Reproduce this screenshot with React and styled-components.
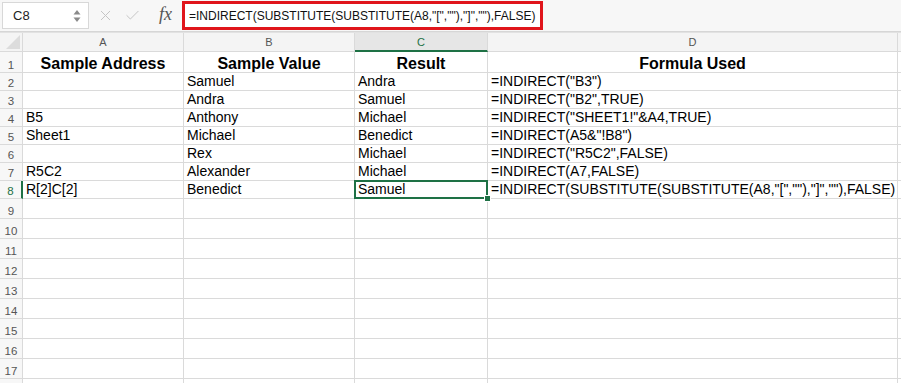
import React from 'react';
import styled, { createGlobalStyle } from 'styled-components';
import { X, Check } from 'lucide-react';

const GlobalStyle = createGlobalStyle`
    html, body {
        margin: 0;
        padding: 0;
        background: #ffffff;
        font-family: "Liberation Sans", Arial, sans-serif;
    }
    * { box-sizing: border-box; }
`

const GREEN = '#1e7145';
const LINE = '#dadada';

const COLS = ['A', 'B', 'C', 'D', ''];

const DATA = [
    ['Sample Address', 'Sample Value', 'Result', 'Formula Used'],
    ['', 'Samuel', 'Andra', '=INDIRECT("B3")'],
    ['', 'Andra', 'Samuel', '=INDIRECT("B2",TRUE)'],
    ['B5', 'Anthony', 'Michael', '=INDIRECT("SHEET1!"&A4,TRUE)'],
    ['Sheet1', 'Michael', 'Benedict', '=INDIRECT(A5&"!B8")'],
    ['', 'Rex', 'Michael', '=INDIRECT("R5C2",FALSE)'],
    ['R5C2', 'Alexander', 'Michael', '=INDIRECT(A7,FALSE)'],
    ['R[2]C[2]', 'Benedict', 'Samuel', '=INDIRECT(SUBSTITUTE(SUBSTITUTE(A8,"[",""),"]",""),FALSE)'],
];

const TOTAL_ROWS = 18;
const LABELED_ROWS = 17;
const SELECTED = { row: 8, col: 2 };

const App = () => {
    const rows = [];
    for (let r = 1; r <= TOTAL_ROWS; r++) {
        rows.push(DATA[r - 1] || ['', '', '', '']);
    }

    return (
        <>
            <GlobalStyle />
            <Window>
                <Toolbar>
                    <NameBox>
                        <span>C8</span>
                        <Spinner>
                            <svg width="8" height="14" viewBox="0 0 8 14">
                                <path d="M4 1 L7.5 5.5 L0.5 5.5 Z" fill="#8a8a8a" />
                                <path d="M4 13 L7.5 8.5 L0.5 8.5 Z" fill="#8a8a8a" />
                            </svg>
                        </Spinner>
                    </NameBox>
                    <ToolIcons>
                        <X size={17} strokeWidth={1.4} color="#c4c4c4" />
                        <Check size={17} strokeWidth={1.4} color="#c4c4c4" />
                        <Fx>fx</Fx>
                    </ToolIcons>
                    <FormulaInput>
                        =INDIRECT(SUBSTITUTE(SUBSTITUTE(A8,"[",""),"]",""),FALSE)
                    </FormulaInput>
                </Toolbar>

                <Sheet>
                    <Corner>
                        <svg width="14" height="14" viewBox="0 0 14 14">
                            <path d="M14 0 L14 14 L0 14 Z" fill="#dcdcdc" />
                        </svg>
                    </Corner>
                    {COLS.map((c, i) => (
                        <ColHeader key={i} $active={i === SELECTED.col}>{c}</ColHeader>
                    ))}

                    {rows.map((row, ri) => {
                        const r = ri + 1;
                        return (
                            <React.Fragment key={r}>
                                <RowHeader $active={r === SELECTED.row}>
                                    {r <= LABELED_ROWS ? r : ''}
                                </RowHeader>
                                {row.map((val, ci) => (
                                    <Cell key={ci} $title={r === 1}>
                                        {val}
                                        {r === SELECTED.row && ci === SELECTED.col && (
                                            <Selection><Handle /></Selection>
                                        )}
                                    </Cell>
                                ))}
                                <Cell />
                            </React.Fragment>
                        );
                    })}
                </Sheet>
            </Window>
        </>
    )
}

export default App

const Window = styled.div`
    width: 901px;
    height: 383px;
    overflow: hidden;
    background: #ffffff;
`

const Toolbar = styled.div`
    height: 32px;
    display: flex;
    align-items: center;
    background: #f7f7f7;
    border-bottom: 1px solid #d6d6d6;
    padding-left: 2px;
`

const NameBox = styled.div`
    width: 87px;
    height: 27px;
    background: #ffffff;
    border: 1px solid #d8d8d8;
    display: flex;
    align-items: center;
    justify-content: space-between;
    padding: 0 7px 0 10px;
    font-size: 13px;
    color: #222;
`

const Spinner = styled.div`
    display: flex;
    align-items: center;
`

const ToolIcons = styled.div`
    display: flex;
    align-items: center;
    padding: 0 10px 0 8px;

    svg + svg {
        margin-left: 10px;
    }
`

const Fx = styled.span`
    font-family: "Liberation Serif", "Times New Roman", serif;
    font-style: italic;
    font-size: 18px;
    color: #555;
    margin-top: -2px;
    margin-left: 18px;
`

const FormulaInput = styled.div`
    width: 361px;
    height: 29px;
    background: #ffffff;
    border: 3px solid #e0151b;
    display: flex;
    align-items: center;
    padding-left: 4px;
    font-size: 12px;
    color: #111;
    white-space: nowrap;
`

const Sheet = styled.div`
    display: grid;
    grid-template-columns: 23px 161px 171px 133px 410px 1fr;
    grid-template-rows: 19px 21px repeat(7, 18px) repeat(10, 20px);
    border-top: 1px solid #e2e2e2;
`

const HeaderBase = styled.div`
    background: #f4f4f4;
    border-right: 1px solid ${LINE};
    border-bottom: 1px solid ${LINE};
    display: flex;
    align-items: center;
    justify-content: center;
    font-size: 11px;
    color: #555;
`

const Corner = styled(HeaderBase)`
    align-items: flex-end;
    justify-content: flex-end;
    padding: 0 2px 2px 0;
`

const ColHeader = styled(HeaderBase)`
    background: ${p => (p.$active ? '#e6e6e6' : '#f4f4f4')};
    color: ${p => (p.$active ? GREEN : '#555')};
    border-bottom: ${p => (p.$active ? `2px solid ${GREEN}` : `1px solid ${LINE}`)};
    padding-top: ${p => (p.$active ? '1px' : '0')};
`

const RowHeader = styled(HeaderBase)`
    background: #f7f7f7;
    align-items: flex-end;
    padding-bottom: 1px;
    font-size: 11.5px;
    color: ${p => (p.$active ? GREEN : '#555')};
    border-right: ${p => (p.$active ? `2px solid ${GREEN}` : `1px solid ${LINE}`)};
`

const Cell = styled.div`
    position: relative;
    border-right: 1px solid ${LINE};
    border-bottom: 1px solid ${LINE};
    display: flex;
    align-items: flex-end;
    justify-content: ${p => (p.$title ? 'center' : 'flex-start')};
    padding: 0 3px 0 3px;
    font-size: ${p => (p.$title ? '16px' : '14px')};
    font-weight: ${p => (p.$title ? 700 : 400)};
    color: #000;
    white-space: nowrap;
    line-height: 17px;
`

const Selection = styled.div`
    position: absolute;
    top: -1px;
    left: -1px;
    right: -1px;
    bottom: -1px;
    border: 2px solid ${GREEN};
    pointer-events: none;
    z-index: 2;
`

const Handle = styled.div`
    position: absolute;
    right: -5px;
    bottom: -5px;
    width: 7px;
    height: 7px;
    background: ${GREEN};
    border: 1px solid #ffffff;
`
